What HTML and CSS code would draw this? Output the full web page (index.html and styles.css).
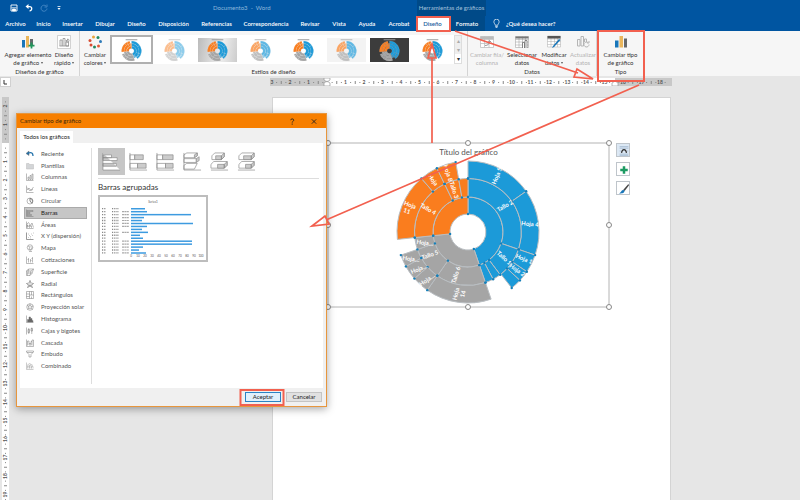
FILE: index.html
```html
<!DOCTYPE html>
<html lang="es">
<head>
<meta charset="utf-8">
<title>Documento3 - Word</title>
<link rel="stylesheet" href="styles.css">
</head>
<body>
<svg class="defs" aria-hidden="true">
  <symbol id="thumb" viewBox="0 0 40 24">
    <path class="t-line" d="M14 1.5h12"/>
    <g id="thumb-ring" transform="translate(20 13) scale(.144)"></g>
  </symbol>
</svg>
<div class="app">
  <header class="top">
    <div class="titlebar">
      <div class="quick">
        <button aria-label="Guardar"><svg viewBox="0 0 16 16"><path d="M2 2h12v12H2z" fill="none" stroke="#fff" stroke-width="1.8"/><path d="M3 7.500h10M5 10h6v4H5z" fill="#fff" stroke="#fff" stroke-width="1.500"/></svg></button>
        <button aria-label="Deshacer"><svg viewBox="0 0 16 16"><path d="M1 5l6-5v10z" fill="#fff"/><path d="M5 5h4c6 0 6 8 0 9" fill="none" stroke="#fff" stroke-width="2.500"/></svg></button>
        <button aria-label="Rehacer"><svg viewBox="0 0 16 16"><path d="M12 4A6 6 0 1 0 14 9M14 1v5H9" fill="none" stroke="#4b8cc8" stroke-width="1.700"/></svg></button>
        <button aria-label="Personalizar"><svg viewBox="0 0 16 16"><path d="M5 5h6" stroke="#fff" stroke-width="1.500"/><path d="M5 8h6l-3 4z" fill="#fff"/></svg></button>
      </div>
      <div class="doc-name">Documento3 &nbsp;-&nbsp; Word</div>
      <div class="context-name">Herramientas de gráficos</div>
    </div>
    <nav class="tabs">
      <a href="#">Archivo</a><a href="#">Inicio</a><a href="#">Insertar</a><a href="#">Dibujar</a><a href="#">Diseño</a><a href="#">Disposición</a><a href="#">Referencias</a><a href="#">Correspondencia</a><a href="#">Revisar</a><a href="#">Vista</a><a href="#">Ayuda</a><a href="#">Acrobat</a><a href="#" class="ctx active">Diseño</a><a href="#" class="ctx">Formato</a>
      <a href="#" class="ask"><svg viewBox="0 0 16 20"><path d="M5 14c0-3-3-4-3-8a6 6 0 0 1 12 0c0 4-3 5-3 8zM5 17h6M6 19h4" fill="none" stroke="#fff" stroke-width="1.600"/></svg>¿Qué desea hacer?</a>
    </nav>
  </header>

  <section class="ribbon">
    <div class="group layouts">
      <div class="tools">
        <button class="tool"><svg viewBox="0 0 28 28"><path d="M2 10h6v15H2z" fill="#1976b9"/><path d="M10 2h6v23h-6z" fill="#eab65c"/><path d="M18 8h6v12h-6z" fill="#65686b"/><path d="M21 15v12M15 21h12" stroke="#20965b" stroke-width="3.500"/></svg><span>Agregar elemento<br>de gráfico <i></i></span></button>
        <button class="tool"><svg viewBox="0 0 28 28"><path d="M1 1h26v26H1z" fill="#fff" stroke="#aaa"/><path d="M6 22V10h4v12M12 22V7h4v15M18 22v-8h5v8zM5 22h19M18 11a3 3 0 1 0 3-3v3z" fill="none" stroke="#888" stroke-width="1.500"/></svg><span>Diseño<br>rápido <i></i></span></button>
      </div>
      <h2>Diseños de gráfico</h2>
    </div>
    <div class="group styles">
      <div class="tools">
        <button class="tool"><svg viewBox="0 0 28 28"><circle cx="11" cy="4" r="3" fill="#e9a33b"/><circle cx="20" cy="5" r="3" fill="#238a61"/><circle cx="4" cy="11" r="3" fill="#d84c31"/><circle cx="25" cy="13" r="3" fill="#2e7ab8"/><circle cx="6" cy="20" r="3" fill="#d84c31"/><circle cx="21" cy="22" r="3" fill="#e25b39"/><circle cx="13" cy="24" r="3" fill="#238a61"/></svg><span>Cambiar<br>colores <i></i></span></button>
        <div class="gallery">
          <button class="style selected" aria-label="Estilo 1"><svg><use href="#thumb"/></svg></button>
          <button class="style pale" aria-label="Estilo 2"><svg><use href="#thumb"/></svg></button>
          <button class="style silver" aria-label="Estilo 3"><svg><use href="#thumb"/></svg></button>
          <button class="style pale mid" aria-label="Estilo 4"><svg><use href="#thumb"/></svg></button>
          <button class="style" aria-label="Estilo 5"><svg><use href="#thumb"/></svg></button>
          <button class="style mist mid" aria-label="Estilo 6"><svg><use href="#thumb"/></svg></button>
          <button class="style dark" aria-label="Estilo 7"><svg><use href="#thumb"/></svg></button>
          <button class="style" aria-label="Estilo 8"><svg><use href="#thumb"/></svg></button>
          <div class="scroll"><button aria-label="Subir">▴</button><button aria-label="Bajar">▾</button><button aria-label="Más" class="more">▾</button></div>
        </div>
      </div>
      <h2>Estilos de diseño</h2>
    </div>
    <div class="group data">
      <div class="tools">
        <button class="tool" disabled><svg viewBox="0 0 28 28"><path d="M1 3h26v22H1zM1 9h26M9 3v22M18 3v22M1 17h26" fill="#fff" stroke="#bbb" stroke-width="1.500"/><path d="M1 3h26v5H1z" fill="#bbb"/><path d="M10 21c6 0 9-3 9-9m-3 3l3-4 4 4" fill="none" stroke="#999" stroke-width="2"/></svg><span>Cambiar fila/<br>columna</span></button>
        <button class="tool"><svg viewBox="0 0 28 28"><path d="M1 3h26v22H1zM1 9h26M8 3v22M15 3v22M21 3v22M1 14h26M1 20h26" fill="#fff" stroke="#999" stroke-width="1"/><path d="M1 3h26v4H1z" fill="#777"/><path d="M15 26V15h4v11M20 26V11h4v15" fill="#fff" stroke="#666" stroke-width="1.500"/></svg><span>Seleccionar<br>datos</span></button>
        <button class="tool"><svg viewBox="0 0 28 28"><path d="M1 2h26v22H1zM1 8h26M8 3v21M15 3v21M21 3v21M1 13h26M1 19h26" fill="#fff" stroke="#aaa"/><path d="M1 2h26v5H1z" fill="#555"/><path d="M27 10L14 24l-4 2 2-4L24 8z" fill="#1976b9"/></svg><span>Modificar<br>datos <i></i></span></button>
        <button class="tool" disabled><svg viewBox="0 0 28 28"><path d="M3 22V9h5v13zM10 22V3h5v19zM17 14V8h4v6M26 19a5 5 0 1 1-2-4m2-3v4h-4" fill="none" stroke="#b5b5b5" stroke-width="2"/></svg><span>Actualizar<br>datos</span></button>
      </div>
      <h2>Datos</h2>
    </div>
    <div class="group type">
      <div class="tools">
        <button class="tool"><svg viewBox="0 0 28 28"><path d="M2 11h7v14H2z" fill="#1976b9"/><path d="M11 2h7v23h-7z" fill="#eab65c"/><path d="M20 7h6v18h-6z" fill="#65686b"/></svg><span>Cambiar tipo<br>de gráfico</span></button>
      </div>
      <h2>Tipo</h2>
    </div>
  </section>

  <main class="workspace">
    <div class="corner"><svg viewBox="0 0 8 8"><path d="M3 2v4h3" fill="none" stroke="#333"/></svg></div>
    <svg class="ruler-v" id="ruler-v"></svg>
    <svg class="ruler-h" id="ruler-h"></svg>
    <article class="page">
      <figure class="chart">
        <svg viewBox="0 0 281 164" id="chart">
          <g id="sunburst" transform="translate(140 89)"></g>
        </svg>
        <figcaption>Título del gráfico</figcaption>
        <svg class="handles" viewBox="0 0 281 164"><rect x="0" y="0" width="281" height="164"/><circle cx="0" cy="0" r="2.500"/><circle cx="140" cy="0" r="2.500"/><circle cx="281" cy="0" r="2.500"/><circle cx="0" cy="82" r="2.500"/><circle cx="281" cy="82" r="2.500"/><circle cx="0" cy="164" r="2.500"/><circle cx="140" cy="164" r="2.500"/><circle cx="281" cy="164" r="2.500"/></svg>
      </figure>
      <div class="chart-tools">
        <button class="on" aria-label="Opciones de diseño"><svg viewBox="0 0 16 16"><path d="M1 1h14M1 3.500h14M1 13h14M1 15h14M1 8h2M13 8h2" stroke="#8fa9c4"/><path d="M4 11c1-7 7-7 8 0" fill="none" stroke="#333" stroke-width="2"/></svg></button>
        <button aria-label="Elementos de gráfico"><svg viewBox="0 0 16 16"><path d="M8 2v12M2 8h12" stroke="#1c9a62" stroke-width="4"/></svg></button>
        <button aria-label="Estilos de gráfico"><svg viewBox="0 0 16 16"><path d="M15 0l1 2-7 9-2-2z" fill="#444"/><path d="M7 9l2 2c-1 4-5 4-9 4 3-1 3-5 7-6z" fill="#1976b9"/></svg></button>
      </div>
    </article>
  </main>
</div>

<section class="dialog" role="dialog" aria-labelledby="dlg-title">
  <header><h1 id="dlg-title">Cambiar tipo de gráfico</h1><button aria-label="Ayuda"><svg viewBox="0 0 8 8"><path d="M2.500 2.500c0-2 3.500-2 3.500 0 0 1.300-1.800 1.200-1.800 2.700M4.200 6.300v1.400" fill="none" stroke="#222"/></svg></button><button aria-label="Cerrar"><svg viewBox="0 0 8 8"><path d="M1.500 1.500l5 5M6.500 1.500l-5 5" stroke="#222"/></svg></button></header>
  <div class="dlg-tabs"><button>Todos los gráficos</button></div>
  <div class="dlg-body">
    <ul class="kinds">
      <li><button><svg viewBox="0 0 16 16"><path d="M0 7l6-5v9z" fill="#1d6ea8"/><path d="M5 6c6-2 9 0 9 6" fill="none" stroke="#1d6ea8" stroke-width="2.500"/></svg>Reciente</button></li>
      <li><button><svg viewBox="0 0 16 16"><path d="M1 3h5l1 2h8v9H1z" fill="#d3d5d7" stroke="#bbb"/></svg>Plantillas</button></li>
      <li><button><svg viewBox="0 0 16 16"><path d="M1 1v14h14M4 13V8h2v5zM8 13V5h2v8zM12 13V2h2v11z"/></svg>Columnas</button></li>
      <li><button><svg viewBox="0 0 16 16"><path d="M1 1v14h14M2 10l4-4 4 5 5-7M2 5l5 6 7-2"/></svg>Líneas</button></li>
      <li><button><svg viewBox="0 0 16 16"><circle cx="8" cy="8" r="6"/><path d="M8 2v6l4 5M8 3c5 0 6 5 4 9" stroke-width="1.800"/></svg>Circular</button></li>
      <li><button class="chosen"><svg viewBox="0 0 16 16"><path d="M1 1v14h14M2 3h12v2H2zM2 7h6v2H2zM2 11h9v2H2z"/></svg>Barras</button></li>
      <li><button><svg viewBox="0 0 16 16"><path d="M1 1v14h14M2 13V6l3-3 4 6 3-5 3 9M3 13V8l4 5V8l4 5V9"/></svg>Áreas</button></li>
      <li><button><svg viewBox="0 0 16 16"><path d="M1 1v14h14M4 11h1M6 7h1M9 9h1M11 4h1M13 7h1M5 4h1M9 12h1M14 2h1" stroke-width="1.500"/></svg>X Y (dispersión)</button></li>
      <li><button><svg viewBox="0 0 16 16"><circle cx="8" cy="7" r="5.500"/><path d="M4 4l4 2-2 4 3 2 3-5-3-3M6 15h6"/></svg>Mapa</button></li>
      <li><button><svg viewBox="0 0 16 16"><path d="M1 1v14h14M5 4v9M3 7h2M9 6v7M9 9h2M13 2v11M11 5h2"/></svg>Cotizaciones</button></li>
      <li><button><svg viewBox="0 0 16 16"><path d="M1 6l4-4h10l-3 9-4 4H1zM1 6h9l5-4M10 6l-2 9M5 2L3 15M2 10h10"/></svg>Superficie</button></li>
      <li><button><svg viewBox="0 0 16 16"><path d="M8 1l2 5 5 1-4 3 2 5-5-3-5 3 2-5-4-3 5-1zM8 1v11M1 7l12 8M15 7L3 15"/></svg>Radial</button></li>
      <li><button><svg viewBox="0 0 16 16"><path d="M1 1h14v14H1zM7 1v14M1 6h6M1 11h6M7 8h8M11 1v7M11 11v4"/></svg>Rectángulos</button></li>
      <li><button><svg viewBox="0 0 16 16"><circle cx="8" cy="8" r="6.500"/><circle cx="8" cy="8" r="3"/><path d="M8 1v4M2 4l4 3M3 13l3-3M10 10l3 3M11 7l4-1"/></svg>Proyección solar</button></li>
      <li><button><svg viewBox="0 0 16 16"><path d="M1 1v14h14"/><path d="M3 14V9h3V4h3v3h3v4h2v3z" fill="#666"/></svg>Histograma</button></li>
      <li><button><svg viewBox="0 0 16 16"><path d="M1 1v14M4 5h3v6H4zM5.500 2v12M10 3h3v5h-3zM11.500 1v13"/></svg>Cajas y bigotes</button></li>
      <li><button><svg viewBox="0 0 16 16"><path d="M1 1v14h14V2h-3v11M3 13V4h3v5h4V5h2M6 9v3h4V9"/></svg>Cascada</button></li>
      <li><button><svg viewBox="0 0 16 16"><path d="M1 2h14v2l-5 5v5H6V9L1 4zM2 5h12"/></svg>Embudo</button></li>
      <li><button><svg viewBox="0 0 16 16"><path d="M1 1v14h14M3 13V8h3v5M7 13V6h3v7M11 13V9h3v4M2 7l5-4 7 4" stroke="#999"/></svg>Combinado</button></li>
    </ul>
    <div class="detail">
      <div class="subtypes">
        <button class="chosen" aria-label="Barras agrupadas"><svg viewBox="0 0 20 20"><path d="M1 1v18h18M1 3h9v3H1zM1 6h15v3H1zM1 12h14v3H1z"/></svg></button>
        <button aria-label="Barras apiladas"><svg viewBox="0 0 20 20"><path d="M1 1v18h18M1 3h5v5H1zM1 12h8v5H1z"/><path class="f" d="M6 3h9v5H6zM9 12h9v5H9z"/></svg></button>
        <button aria-label="Barras 100% apiladas"><svg viewBox="0 0 20 20"><path d="M1 1v18h18M1 3h6v5H1zM1 12h9v5H1z"/><path class="f" d="M7 3h11v5H7zM10 12h8v5h-8z"/></svg></button>
        <button aria-label="Barras 3D agrupadas"><svg viewBox="0 0 20 20"><path d="M1 1v18h18M1 3l3-2h11v3l-3 2H1zM1 7h13v4H1zM1 14l3-2h11l-3 6H1z"/><path class="f" d="M12 3l3-2v3l-3 2zM14 7l3-2v4l-3 2z"/></svg></button>
        <button aria-label="Barras 3D apiladas"><svg viewBox="0 0 20 20"><path d="M1 19h18M2 4l3-3h10v4l-3 3H2zM1 13l3-3h14v4l-3 3H1z"/><path class="f" d="M6 4h6v4H6zM12 4l3-3v4l-3 3zM8 13h7v4H8zM15 13l3-3v4l-3 3z"/></svg></button>
        <button aria-label="Barras 3D 100% apiladas"><svg viewBox="0 0 20 20"><path d="M1 19h18M2 4l3-3h13v4l-3 3H2zM2 13l3-3h13v4l-3 3H2z"/><path class="f" d="M7 4h8v4H7zM15 4l3-3v4l-3 3zM9 13h6v4H9zM15 13l3-3v4l-3 3z"/></svg></button>
      </div>
      <h2>Barras agrupadas</h2>
      <svg class="preview" viewBox="0 0 106 63" id="preview"></svg>
    </div>
  </div>
  <footer><button class="ok">Aceptar</button><button>Cancelar</button></footer>
</section>

<svg class="marks" viewBox="0 0 800 500" aria-hidden="true">
  <path d="M417 17h33v14h-33zM598 31h46v50h-46zM240.500 390h43v15h-43z" stroke-width="2"/>
  <path d="M432 143V58M432 44l-4 14h8zM455 31l123 42M593 79l-16-10-3 8zM639 85L326 220M312 226l13-10 4 8z" stroke-width="1.700"/>
</svg>
<script src="app.js"></script>
</body>
</html>
```
FILE: styles.css
```css
* { box-sizing: border-box; }
body { margin: 0; font-family: Lato, "Open Sans", sans-serif; font-size: 6px; line-height: 8px; color: #333; overflow: hidden; }
button { font: inherit; color: inherit; background: none; border: 0; padding: 0; margin: 0; }
h1, h2, ul, figure { margin: 0; padding: 0; font-weight: 400; font-size: inherit; }
ul { list-style: none; }
a { color: inherit; text-decoration: none; }
svg { display: block; }
.defs { position: absolute; width: 0; height: 0; }

.app { display: flex; flex-direction: column; min-height: 100vh; background: #e6e6e6; }
.top { background: #0055a1; color: #fff; }
.titlebar { display: grid; grid-template-columns: 213px 204px 69px; height: 16px; align-items: center; }
.quick { display: flex; gap: 7px; padding-left: 10px; }
.quick svg { width: 8px; height: 8px; }
.doc-name { color: #8fb8dc; }
.context-name { background: #004a88; color: #a5c2dc; align-self: stretch; line-height: 16px; text-align: center; white-space: nowrap; }
.tabs { display: grid; grid-template-columns: 31px 25px 33px 32px 31px 43px 43px 56px 32px 26px 30px 34px 33px 36px auto; height: 15px; line-height: 15px; font-weight: 600; white-space: nowrap; }
.tabs a { text-align: center; }
.tabs .ctx { background: #004a88; }
.tabs .active { background: #fff; color: #1b5c9c; }
.tabs .ask { display: flex; gap: 6px; align-items: center; padding-left: 8px; }
.ask svg { width: 7px; height: 9px; }

.ribbon { display: flex; height: 45px; background: #f6f6f6; }
.group { display: flex; flex-direction: column; justify-content: space-between; padding-top: 4px; border-right: 1px solid #d4d4d4; }
.group h2 { text-align: center; line-height: 8px; }
.tools { display: flex; }
.tool { display: flex; flex-direction: column; align-items: center; gap: 2px; white-space: nowrap; }
.tool svg { width: 14px; height: 14px; }
.tool:disabled { color: #b4b4b4; }
.tool i { display: inline-block; border: 1px solid transparent; border-top: 2px solid #555; vertical-align: middle; }
.layouts { width: 80px; }
.layouts .tool:first-child { width: 56px; }
.layouts .tool { width: 16px; }
.styles { width: 388px; }
.styles > .tools > .tool { width: 30px; }
.gallery { display: flex; background: #fff; height: 29px; }
.style { width: 43px; padding: 2px; }
.style svg { width: 39px; height: 24px; }
.selected { border: 2px solid #b0b0b0; padding: 0; }
.pale svg { opacity: .5; }
.mid svg { opacity: .7; }
.silver svg { background: linear-gradient(100deg, #bbb, #eee 60%, #ccc); }
.mist svg { background: #eee; }
.dark svg { background: #3c3c3c; }
.t-line { stroke: #999; stroke-width: 1; }
.scroll { display: flex; flex-direction: column; width: 8px; background: #eee; border: 1px solid #ddd; }
.scroll button { flex: 1; line-height: 8px; color: #aaa; }
.scroll .more { background: #fff; color: #333; }
.data { width: 129px; }
.data .tool { width: 32px; }
.data .tool:first-child { width: 38px; }
.data .tool:last-child { width: 26px; }
.type { width: 47px; border: 0; }
.type .tool { width: 100%; }

.workspace { flex: 1; display: grid; grid-template-columns: 16px 254px 402px 1fr; grid-template-rows: 21px 1fr; }
.corner { width: 11px; height: 10px; margin-top: 1px; background: #fff; border: 1px solid #d0d0d0; }
.corner svg { width: 8px; height: 8px; }
.ruler-h { grid-area: 1 / 3; width: 100%; height: 8px; margin-top: 2px; }
.ruler-v { grid-area: 2 / 1; width: 7px; height: 100%; margin-left: 2px; overflow: hidden; }
.ruler-h text, .ruler-v text { font-size: 5px; font-weight: 700; fill: #555; text-anchor: middle; }
.page { grid-area: 2 / 3; margin: 0 1px 0 2px; background: #fff; border: 1px solid #d4d4d4; border-width: 1px 1px 0; display: flex; gap: 7px; padding: 45px 0 0 55px; }
.chart { position: relative; width: 281px; height: 164px; }
.chart svg { width: 281px; height: 164px; }
.chart figcaption { position: absolute; top: 4px; left: 0; right: 0; text-align: center; font-size: 8px; line-height: 10px; color: #555; }
.handles { position: absolute; top: 0; left: 0; overflow: visible; }
.handles rect { fill: none; stroke: #b4b4b4; }
.handles circle { fill: #fff; stroke: #888; }
.chart text { fill: #fff; font-weight: 700; font-size: 6px; text-anchor: middle; }
.dot { fill: #167fb8; }
.chart-tools { display: flex; flex-direction: column; gap: 5px; }
.chart-tools button { width: 14px; height: 14px; padding: 2px; background: #fff; border: 1px solid #bfc5cb; }
.chart-tools .on { background: #dce8f4; }
.chart-tools svg { width: 10px; height: 10px; }

.dialog { position: absolute; left: 16px; top: 113px; width: 311px; display: flex; flex-direction: column; background: #f0f0f0; border: 1px solid #e7963d; box-shadow: 0 2px 8px rgba(0, 0, 0, .35); }
.dialog header { display: flex; gap: 14px; align-items: center; height: 14px; padding: 0 8px 0 3px; background: #f77f00; color: #40280c; }
.dialog header h1 { flex: 1; }
.dialog header svg { width: 8px; height: 7px; }
.dlg-tabs { display: flex; padding: 3px 3px 0; }
.dlg-tabs button { width: 53px; height: 12px; background: #fff; white-space: nowrap; color: #222; }
.dlg-body { display: flex; height: 245px; margin: 0 3px; padding: 5px 4px 4px; background: #fff; }
.kinds { display: flex; flex-direction: column; width: 68px; padding: 0 4px 12px 0; border-right: 1px solid #ddd; color: #555; }
.kinds li { flex: 1; display: flex; }
.kinds button { flex: 1; display: flex; align-items: center; gap: 7px; padding-left: 2px; white-space: nowrap; }
.kinds svg { width: 8px; height: 8px; fill: none; stroke: #777; }
.kinds .chosen { background: #c6c6c6; outline: 1px solid #aaa; outline-offset: -1px; color: #222; }
.detail { flex: 1; padding-left: 6px; }
.subtypes { display: flex; padding-bottom: 3px; border-bottom: 1px solid #ddd; }
.subtypes button { width: 27px; height: 27px; padding: 4px; }
.subtypes .chosen { background: #c6c6c6; }
.subtypes svg { width: 19px; height: 19px; fill: #fff; stroke: #888; stroke-width: .7; }
.subtypes .f { fill: #ccc; }
.detail h2 { padding: 3px 0 2px; font-size: 8px; line-height: 11px; color: #333; }
.preview { width: 110px; height: 67px; border: 2px solid #bdbdbd; }
.preview text { font-size: 3px; fill: #555; }
.dialog footer { display: flex; justify-content: flex-end; gap: 5px; padding: 4px; }
.dialog footer button { width: 36px; height: 10px; background: #e1e1e1; border: 1px solid #c4c4c4; line-height: 8px; color: #222; }
.dialog footer .ok { background: #e0f0fb; border-color: #2a82c4; }

.marks { position: absolute; left: 0; top: 0; width: 800px; height: 500px; fill: none; stroke: #f2604f; pointer-events: none; }
```
FILE: app.js
```js
const NS = 'http://www.w3.org/2000/svg';
function add(parent, tag, attrs, text) {
  const el = document.createElementNS(NS, tag);
  for (const key in attrs) el.setAttribute(key, attrs[key]);
  if (text) el.textContent = text;
  parent.appendChild(el);
  return el;
}

/* Sunburst: ring index, start and end in degrees clockwise from the top */
const BLUE = '#1c9ad8', GRAY = '#a5a5a5', ORANGE = '#fa7d1e';
const RADII = [18, 35, 53.5, 71];
const SLICES = [
  [0, 0, 161, BLUE], [1, 0, 109, BLUE], [1, 109, 143, BLUE], [1, 143, 152, BLUE], [1, 152, 161, BLUE],
  [2, 0, 55, BLUE], [2, 55, 109, BLUE], [2, 109, 124, BLUE], [2, 124, 133, BLUE], [2, 133, 142, BLUE],
  [0, 161, 264, GRAY], [1, 161, 215, GRAY], [1, 215, 251, GRAY], [1, 251, 264, GRAY],
  [2, 161, 215, GRAY], [2, 215, 229, GRAY], [2, 229, 241, GRAY], [2, 241, 251, GRAY],
  [0, 264, 360, ORANGE], [1, 264, 334, ORANGE], [1, 334, 350, ORANGE], [1, 350, 360, ORANGE],
  [2, 264, 319, ORANGE], [2, 319, 334, ORANGE], [2, 334, 350, ORANGE]
];
function at(radius, deg) {
  const a = deg * Math.PI / 180;
  return [(radius * Math.sin(a)).toFixed(2), (-radius * Math.cos(a)).toFixed(2)];
}
function slicePath(ring, from, to) {
  const r0 = RADII[ring], r1 = RADII[ring + 1], large = to - from > 180 ? 1 : 0;
  return `M${at(r0, from)}L${at(r1, from)}A${r1} ${r1} 0 ${large} 1 ${at(r1, to)}L${at(r0, to)}A${r0} ${r0} 0 ${large} 0 ${at(r0, from)}z`;
}
const sun = document.getElementById('sunburst');
const mini = document.getElementById('thumb-ring');
for (const [ring, from, to, fill] of SLICES) {
  const d = slicePath(ring, from, to);
  add(sun, 'path', { d, fill, stroke: '#b9bec2', 'stroke-width': 1 });
  add(mini, 'path', { d, fill, stroke: '#ddd', 'stroke-width': 1 });
}
for (const [ring, from, to] of SLICES) {
  const [x, y] = at(RADII[ring + 1], ring ? to : from);
  add(sun, 'circle', { cx: x, cy: y, r: 1.2, class: 'dot' });
  const [u, v] = at(RADII[ring], from);
  add(sun, 'circle', { cx: u, cy: v, r: 1.2, class: 'dot' });
}
const LABELS = [
  ['Hoja 5', 29, -56, -68], ['Tallo 2', 37, -26, -30], ['Hoja 4', 62, -8, 5], ['Hoja 1', 56, 27, 22],
  ['Hoja 2', 49, 38, 35], ['Tallo 1', 36, 26, 42], ['Tallo 4', -40, -23, 30], ['Hoja', -58, -27, 20],
  ['11', -61, -21, 20], ['Hoja', -35, -52, 55], ['Hoja 8', -20, -59, 72], ['Tallo 3', -14, -42, 72],
  ['Hoja…', -43, 11, 8], ['Tallo 5', -38, 23, -20], ['Hoja…', -57, 27, 8], ['Hoja…', -49, 37, -22],
  ['Hoja…', -41, 48, -35], ['Tallo 6', -12, 43, -72], ['Hoja', -12, 62, -76], ['14', -5, 62, -76]
];
for (const [text, x, y, turn] of LABELS) {
  add(sun, 'text', { transform: `translate(${x} ${y}) rotate(${turn})`, dy: 2 }, text);
}

/* Rulers */
const STEP = 18.5;
const h = document.getElementById('ruler-h');
add(h, 'rect', { width: 402, height: 8, fill: '#c8c8c8' });
add(h, 'rect', { x: 57, width: 288, height: 8, fill: '#fff' });
for (let i = -12; i <= 73; i++) {
  const x = 57 + i * STEP / 4;
  if (i % 4) add(h, 'rect', { x, y: i % 2 ? 4 : 3, width: 1, height: i % 2 ? 1 : 3, fill: '#888' });
  else if (i) add(h, 'text', { x: Math.max(x, 2), y: 6 }, String(Math.abs(i / 4)));
}
add(h, 'path', { d: 'M54 0h6v2l-3 2-3-2zM54 8V5l3-2 3 2v3zM342 8V5l3-2 3 2v3z', fill: '#fff', stroke: '#999', 'stroke-width': .7 });
const v = document.getElementById('ruler-v');
add(v, 'rect', { width: 7, height: 46, fill: '#c8c8c8' });
add(v, 'rect', { y: 46, width: 7, height: '100%', fill: '#fff' });
for (let i = -9; i <= 77; i++) {
  const y = 46 + i * STEP / 4;
  if (i % 4) add(v, 'rect', { x: i % 2 ? 3 : 2, y, width: i % 2 ? 1 : 3, height: 1, fill: '#888' });
  else if (i) add(v, 'text', { transform: `translate(5 ${y}) rotate(-90)` }, String(Math.abs(i / 4)));
}

/* Bar chart preview */
const p = document.getElementById('preview');
add(p, 'text', { x: 53, y: 6, 'text-anchor': 'middle' }, 'Series1');
const BARS = [14, 16, 60, 13, 11, 62, 16, 11, 17, 9, 12, 61, 61, 12, 8, 15];
BARS.forEach((width, i) => {
  const y = 11 + i * 2.95;
  add(p, 'rect', { x: 31, y, width, height: 1.5, fill: '#3d9be0' });
  add(p, 'path', { d: `M2 ${y + .7}h4M12 ${y + .7}h7`, stroke: '#888', 'stroke-width': 1.3, 'stroke-dasharray': '1 .8' });
  if (![0, 7, 9, 10].includes(i)) add(p, 'path', { d: `M22 ${y + .7}h7`, stroke: '#aaa', 'stroke-width': 1.2, 'stroke-dasharray': '2 .4' });
});
for (let i = 0; i <= 10; i++) add(p, 'text', { x: 31 + i * 7, y: 60, 'text-anchor': 'middle' }, String(i * 10));
```
